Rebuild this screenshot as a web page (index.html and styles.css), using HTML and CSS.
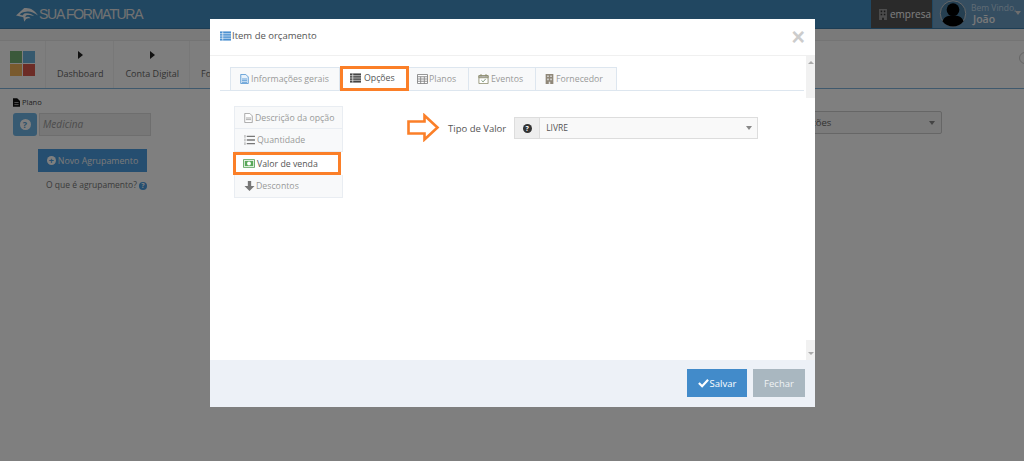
FILE: index.html
```html
<!DOCTYPE html>
<html lang="pt-BR">
<head>
<meta charset="utf-8">
<title>Item de orçamento</title>
<link rel="stylesheet" href="styles.css">
</head>
<body>
<div class="page">
  <header class="topbar">
    <div class="logo">
      <svg class="logo-mark" viewBox="0 0 24 16"><path d="M0 9 9 1c6-1 11 2 15 8-5-3-9-5-13-4-3 0-5 1-7 3l3 1 2-2c4-1 8 0 11 3-3-1-6-2-9-1l-1 2c2-1 4-1 6 1-2 0-4 0-5 1l-2 3-1-5z"/></svg>
      <span class="logo-text">SUA FORMATURA</span>
    </div>
    <div class="company">
      <svg class="company-icon" viewBox="0 0 10 14"><path d="M0 0h10v14H0z" fill="#9a9a9a"/><path d="M2 2h2v2H2zM6 2h2v2H6zM2 6h2v2H2zM6 6h2v2H6zM4 11h2v3H4z" fill="#333"/></svg>
      <span>empresa</span>
    </div>
    <div class="user">
      <svg class="avatar" viewBox="0 0 28 28"><circle cx="14" cy="14" r="13.2" fill="#4a7ea3" stroke="#cfcfcf" stroke-width="1"/><circle cx="14" cy="10" r="6.6" fill="#000"/><path d="M3 22c2-5 6-6 11-6s9 1 11 6c-3 4-7 5.500-11 5.500S6 26 3 22z" fill="#000"/></svg>
      <div class="user-text"><span class="welcome">Bem Vindo,</span><span class="user-name">João</span></div>
      <span class="caret light"></span>
    </div>
  </header>
  <div class="strip"></div>
  <nav class="nav">
    <div class="tiles"><i class="t-green"></i><i class="t-blue"></i><i class="t-yellow"></i><i class="t-red"></i></div>
    <div class="nav-item"><span class="play"></span>Dashboard</div>
    <div class="nav-item"><span class="play"></span>Conta Digital</div>
    <div class="nav-item"><span class="play"></span>Formaturas</div>
    <div class="nav-spacer"></div>
    <span class="nav-circle"></span>
  </nav>
  <main class="content">
    <section class="plan">
      <div class="plan-label"><svg class="i9" viewBox="0 0 10 12"><path d="M0 0h6l4 4v8H0z" fill="#111"/><path d="M2 6h6M2 9h6" stroke="#ddd"/></svg>Plano</div>
      <div class="plan-row">
        <span class="help-box"><span class="help-dot">?</span></span>
        <span class="plan-input">Medicina</span>
      </div>
      <button class="new-group"><span class="plus">+</span>Novo Agrupamento</button>
      <p class="what">O que é agrupamento? <span class="help-small">?</span></p>
    </section>
    <div class="bg-select">Opções<span class="caret"></span></div>
  </main>
</div>
<div class="overlay"></div>
<div class="modal">
  <div class="modal-head">
    <h1><svg class="i12" viewBox="0 0 12 10"><path d="M0 0h12v10H0z" fill="#4a90d0"/><path d="M0 2.500h12M0 5h12M0 7.500h12M3 0v10" stroke="#fff" stroke-width=".7"/></svg>Item de orçamento</h1>
    <span class="close">×</span>
  </div>
  <div class="modal-body">
    <div class="modal-main">
      <ul class="tabs">
        <li class="tab"><svg class="i12" viewBox="0 0 10 12"><path d="M.5.500h6l3 3v8h-9z" fill="#e8f2fb" stroke="#4a90d0"/><path d="M2 6h6M2 8h6M2 10h6" stroke="#4a90d0"/></svg>Informações gerais</li>
        <li class="tab active"><svg class="i12" viewBox="0 0 12 10"><path d="M0 0h12v10H0z" fill="#444"/><path d="M0 2.500h12M0 5h12M0 7.500h12M3 0v10" stroke="#fff" stroke-width=".7"/></svg>Opções</li>
        <li class="tab"><svg class="i12" viewBox="0 0 12 11"><path d="M.5.500h11v10H.5z" fill="#fff" stroke="#888"/><path d="M.5 3h11M.5 5.500h11M.5 8h11M4 3v8M8 3v8" stroke="#888"/></svg>Planos</li>
        <li class="tab"><svg class="i12" viewBox="0 0 12 12"><path d="M.5 2h11v9.500H.5z" fill="#fff" stroke="#8a8a6a"/><path d="M.5 2h11v2.500H.5zM3 0v3M9 0v3" fill="#bbb" stroke="#8a8a6a"/><path d="m3.500 7.500 2 2 3-3.500" fill="none" stroke="#6a8a6a"/></svg>Eventos</li>
        <li class="tab"><svg class="i12" viewBox="0 0 10 13"><path d="M0 0h10v13H0z" fill="#8f8778"/><path d="M2 2h2v2H2zM6 2h2v2H6zM2 6h2v2H2zM6 6h2v2H6zM4 10h2v3H4z" fill="#ddd"/></svg>Fornecedor</li>
      </ul>
      <div class="options">
        <ul class="side">
          <li class="side-item"><svg class="i12" viewBox="0 0 10 12"><path d="M.5.500h6l3 3v8h-9z" fill="#fff" stroke="#999"/><path d="M2 6h6M2 8h6" stroke="#999"/></svg>Descrição da opção</li>
          <li class="side-item"><svg class="i12" viewBox="0 0 12 11"><path d="M3 1.500h9M3 5.500h9M3 9.500h9" stroke="#777" stroke-width="1.600"/><path d="M1 0v3M1 4v3M1 8v3" stroke="#999"/></svg>Quantidade</li>
          <li class="side-item current"><svg class="i13" viewBox="0 0 14 10"><path d="M.5.500h13v9H.5z" fill="#fff" stroke="#4a9a4a"/><path d="M2 2h10v6H2z" fill="#5aa85a"/><circle cx="7" cy="5" r="2.200" fill="#fff"/></svg>Valor de venda</li>
          <li class="side-item"><svg class="i12" viewBox="0 0 12 12"><path d="M4 0h4v6h4l-6 6-6-6h4z" fill="#777"/></svg>Descontos</li>
        </ul>
        <div class="value-row">
          <svg class="arrow" viewBox="0 0 33 29"><path d="M1.500 8.500h16v-6l13 12-13 12v-6h-16z" fill="#fff" stroke="#fb7f28" stroke-width="2.600"/></svg>
          <label class="value-label">Tipo de Valor</label>
          <div class="select-group">
            <span class="addon"><span class="help-black">?</span></span>
            <span class="select">LIVRE<span class="caret"></span></span>
          </div>
        </div>
      </div>
    </div>
    <div class="scrollbar"><span class="arr-up"></span><span class="thumb"></span><span class="arr-down"></span></div>
  </div>
  <div class="modal-foot">
    <button class="btn save"><svg class="i12" viewBox="0 0 12 10"><path d="M1 5l3.500 3.500L11 1.500" fill="none" stroke="#fff" stroke-width="2.400"/></svg>Salvar</button>
    <button class="btn cancel">Fechar</button>
  </div>
</div>
</body>
</html>
```
FILE: styles.css
```css
* { box-sizing: border-box; }
html, body { margin: 0; padding: 0; height: 100%; overflow: hidden; background: #fff; }
body { font-family: "Open Sans", "Liberation Sans", sans-serif; font-size: 12px; color: #555; }
ul { list-style: none; margin: 0; padding: 0; }
svg { display: inline-block; flex: none; }
button { font-family: inherit; border: 0; }

.page { height: 461px; background: #fefefe; display: flex; flex-direction: column; }

.topbar { height: 29px; background: #428ec2; display: flex; border-bottom: 1px solid #3a7aa8; }
.logo { flex: 1; display: flex; align-items: center; padding-left: 16px; }
.logo-mark { width: 22px; height: 15px; fill: #f2f2f2; }
.logo-text { font-family: "Liberation Sans", sans-serif; font-size: 14px; letter-spacing: -1.250px; color: #e4e4e4; margin-left: 1px; white-space: nowrap; }
.company { width: 61px; background: #555; display: flex; align-items: center; gap: 3px; padding-left: 8px; color: #fff; font-size: 10px; margin-right: 1px; }
.company-icon { width: 8px; height: 11px; }
.user { width: 91px; background: #6a9cc2; display: flex; padding-left: 6px; }
.avatar { width: 28px; height: 27px; }
.user-text { display: flex; flex-direction: column; margin-left: 4px; width: 44px; }
.welcome { font-size: 8.500px; line-height: 11px; margin-top: 2px; color: #c0d8e8; white-space: nowrap; }
.user-name { font-size: 10.500px; line-height: 13px; font-weight: 600; color: #f2f2f2; padding-left: 2px; }
.caret { display: inline-block; width: 0; height: 0; border: 3px solid transparent; border-top: 4px solid #888; border-bottom: 0; }
.caret.light { border-top-color: #ddd; margin-top: 11px; }

.strip { height: 12px; background: #f4f4f4; border-bottom: 1px solid #e8e8e8; }

.nav { height: 48px; background: #fcfcfc; border-bottom: 1px solid #7fb2da; display: flex; }
.tiles { width: 46px; padding: 10px 9px 0 10px; display: grid; grid-template-columns: 12px 12px; grid-template-rows: 12px 12px; gap: 1px; border-right: 1px solid #f0f0f0; }
.tiles i { display: block; height: 12px; }
.t-green { background: #76b376; }
.t-blue { background: #6db2dd; }
.t-yellow { background: #f2b45c; }
.t-red { background: #d9584c; }
.nav-item { display: flex; flex-direction: column; align-items: center; gap: 8px; padding: 10px 10px 0 11px; border-right: 1px solid #f0f0f0; font-size: 9px; color: #666; white-space: nowrap; }
.play { width: 0; height: 0; border-left: 5px solid #222; border-top: 4px solid transparent; border-bottom: 4px solid transparent; }
.nav-spacer { flex: 1; }
.nav-circle { width: 12px; height: 12px; border: 1px solid #ccc; border-radius: 50%; margin: 11px -7px 0 0; }

.content { flex: 1; display: flex; justify-content: space-between; padding: 9px 0 0 13px; }
.plan { display: flex; flex-direction: column; align-items: flex-start; width: 140px; }
.plan-label { display: flex; align-items: center; gap: 2px; font-size: 7.500px; line-height: 9px; color: #444; }
.i9 { width: 7px; height: 9px; }
.plan-row { display: flex; gap: 2px; margin-top: 6px; }
.help-box { width: 24px; height: 23px; background: #6eb4e4; border-radius: 3px; display: flex; align-items: center; justify-content: center; }
.help-dot { width: 11px; height: 11px; border-radius: 50%; background: #fff; color: #5aa0d0; font-size: 9px; font-weight: 700; line-height: 11px; text-align: center; }
.plan-input { width: 112px; height: 23px; background: #eee; border: 1px solid #ddd; padding-left: 3px; font-size: 10px; line-height: 21px; font-style: italic; color: #999; }
.new-group { width: 109px; height: 23px; margin: 13px 0 0 25px; background: #4a9ce0; color: #f2f2f2; font-size: 8.800px; padding: 0; display: flex; align-items: center; justify-content: center; gap: 2px; }
.plus { width: 9px; height: 9px; border-radius: 50%; background: #fff; color: #4a9ce0; font-size: 9px; line-height: 9px; font-weight: 700; }
.what { margin: 7px 0 0 33px; font-size: 8.500px; line-height: 12px; color: #777; white-space: nowrap; }
.help-small { display: inline-block; width: 8px; height: 8px; border-radius: 50%; background: #4a9ce0; color: #fff; font-size: 7px; font-weight: 700; line-height: 8px; text-align: center; }
.bg-select { width: 210px; height: 23px; margin: 13px 82px 0 0; border: 1px solid #ccc; border-radius: 2px; background: #f6f6f6; font-size: 9.500px; line-height: 21px; padding: 0 6px 0 65px; display: flex; justify-content: space-between; align-items: center; color: #666; }

.overlay { position: absolute; left: 0; top: 0; width: 100%; height: 461px; background: rgba(0, 0, 0, .5); }

.modal { position: absolute; left: 210px; top: 19px; width: 605px; height: 388px; background: #fff; display: flex; flex-direction: column; }
.modal-head { height: 37px; border-bottom: 1px solid #f0f0f0; padding: 0 10px; display: flex; align-items: flex-start; justify-content: space-between; }
.modal-head h1 { margin: 10px 0 0; font-size: 9.500px; font-weight: 400; line-height: 14px; color: #555; display: flex; align-items: center; gap: 1px; }
.i12 { width: 11px; height: 10px; }
.i13 { width: 12px; height: 9px; }
.close { font-family: "Liberation Sans", sans-serif; font-size: 23px; line-height: 23px; margin: 7px 0 0; color: #ccc; font-weight: 700; }

.modal-body { flex: 1; display: flex; min-height: 0; }
.modal-main { flex: 1; padding: 11px 2px 0 10px; }
.tabs { display: flex; border-bottom: 1px solid #dde6ef; padding-left: 10px; height: 24px; }
.tab { height: 23px; display: flex; align-items: center; gap: 1px; padding: 0 0 1px 8px; background: #f8f9fa; border: 1px solid #dde6ef; border-bottom: 0; border-left: 0; font-size: 8.750px; color: #999; white-space: nowrap; }
.tab:first-child { border-left: 1px solid #dde6ef; width: 110px; }
.tab:nth-child(3) { width: 60px; }
.tab:nth-child(4) { width: 67px; padding-left: 9px; gap: 2px; }
.tab:nth-child(5) { width: 81px; }
.tab.active { width: 69px; height: 25px; margin-top: -1px; background: #fff; border: 3px solid #fb7f28; color: #555; padding-left: 7px; gap: 3px; }

.options { display: flex; padding: 15px 0 0 14px; }
.side { width: 109px; }
.side-item { height: 23px; display: flex; align-items: center; gap: 1px; padding-left: 9px; background: #f8f9fa; border: 1px solid #e9edf2; border-top: 0; font-size: 8.750px; color: #999; white-space: nowrap; }
.side-item:first-child { border-top: 1px solid #e9edf2; padding-left: 8px; }
.side-item:nth-child(2) { gap: 2px; }
.side-item.current { width: 108px; margin-left: -1px; background: #fff; border: 3px solid #fb7f28; color: #555; padding-left: 7px; gap: 2px; }

.value-row { display: flex; align-items: flex-start; margin-left: 64px; }
.arrow { width: 33px; height: 29px; margin-top: 7px; }
.value-label { margin: 16px 0 0 8px; font-size: 9.500px; line-height: 14px; color: #555; white-space: nowrap; }
.select-group { display: flex; width: 244px; height: 22px; margin: 11px 0 0 8px; border: 1px solid #ddd; }
.addon { width: 25px; background: #eeeeee; border-right: 1px solid #ddd; display: flex; align-items: center; justify-content: center; }
.help-black { width: 9px; height: 9px; border-radius: 50%; background: #333; color: #fff; font-size: 7px; font-weight: 700; line-height: 9px; text-align: center; }
.select { flex: 1; background: #f9f9f9; padding: 0 5px 1px 6px; font-size: 8.500px; line-height: 19px; color: #555; display: flex; justify-content: space-between; align-items: center; }

.scrollbar { width: 9px; background: #f1f1f1; display: flex; flex-direction: column; align-items: center; position: relative; }
.thumb { position: absolute; left: 0; top: 42px; width: 100%; height: 242px; background: #fff; }
.arr-up { width: 0; height: 0; margin-top: 5px; border: 3px solid transparent; border-bottom: 3px solid #aaa; border-top: 0; }
.arr-down { width: 0; height: 0; margin-top: auto; margin-bottom: 5px; border: 3px solid transparent; border-top: 3px solid #aaa; border-bottom: 0; }

.modal-foot { height: 47px; background: #edf1f7; display: flex; justify-content: flex-end; align-items: flex-start; gap: 6px; padding: 9px 10px 0 0; }
.btn { height: 28px; font-size: 9.500px; padding: 0; display: flex; align-items: center; justify-content: center; color: #fff; }
.save { width: 60px; background: #428bca; gap: 1px; }
.cancel { width: 52px; background: #a9b7c0; color: #f0f3f5; }
```
